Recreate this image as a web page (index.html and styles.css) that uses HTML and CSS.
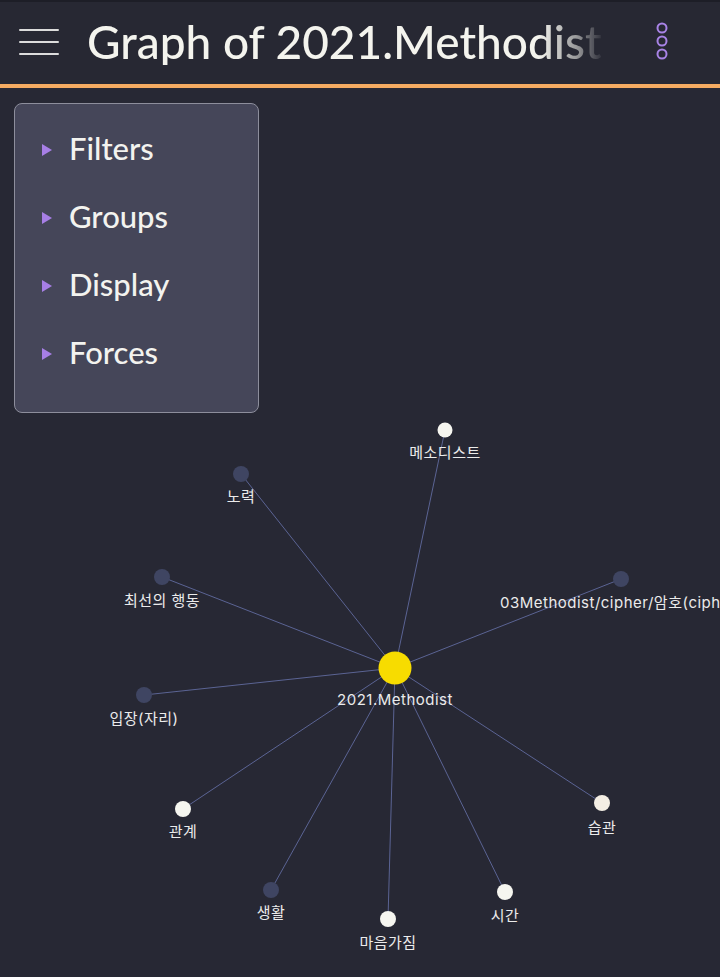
FILE: index.html
```html
<!DOCTYPE html>
<html>
<head>
<meta charset="utf-8">
<link rel="stylesheet" href="styles.css">
</head>
<body>
<div class="app">
  <header class="topbar">
    <div class="menu-btn">
      <svg width="40" height="30" viewBox="0 0 40 30"><g stroke="#dcdcdc" stroke-width="2" stroke-linecap="round"><line x1="1" y1="3" x2="39" y2="3"/><line x1="1" y1="15" x2="39" y2="15"/><line x1="1" y1="27" x2="39" y2="27"/></g></svg>
    </div>
    <div class="title-wrap"><h1 class="title">Graph of 2021.Methodist</h1></div>
    <div class="kebab">
      <svg width="14" height="40" viewBox="0 0 14 40"><g fill="none" stroke="#a883e6" stroke-width="2"><circle cx="7" cy="7" r="4.5"/><circle cx="7" cy="20" r="4.5"/><circle cx="7" cy="33" r="4.5"/></g></svg>
    </div>
  </header>
  <div class="accent"></div>
  <main class="canvas">
    <svg class="graph" width="720" height="890" viewBox="0 87 720 890">
      <g stroke="#5b6494" stroke-width="1">
        <line x1="395" y1="667" x2="445" y2="429"/>
        <line x1="395" y1="667" x2="241" y2="473"/>
        <line x1="395" y1="667" x2="162" y2="576"/>
        <line x1="395" y1="667" x2="621" y2="578"/>
        <line x1="395" y1="667" x2="144" y2="694"/>
        <line x1="395" y1="667" x2="183" y2="808"/>
        <line x1="395" y1="667" x2="271" y2="889"/>
        <line x1="395" y1="667" x2="388" y2="918"/>
        <line x1="395" y1="667" x2="505" y2="891"/>
        <line x1="395" y1="667" x2="602" y2="802"/>
      </g>
      <g>
        <circle cx="445" cy="429" r="7.5" fill="#f6f6f0"/>
        <circle cx="241" cy="473" r="8" fill="#3f4562"/>
        <circle cx="162" cy="576" r="8" fill="#3f4562"/>
        <circle cx="621" cy="578" r="8" fill="#3f4562"/>
        <circle cx="144" cy="694" r="8" fill="#3f4562"/>
        <circle cx="183" cy="808" r="8" fill="#f6f6f0"/>
        <circle cx="271" cy="889" r="8" fill="#3f4562"/>
        <circle cx="388" cy="918" r="8" fill="#f6f6f0"/>
        <circle cx="505" cy="891" r="8" fill="#f6f6f0"/>
        <circle cx="602" cy="802" r="8" fill="#f4eee4"/>
        <circle cx="395" cy="667" r="16.5" fill="#f7dc00"/>
      </g>
      <g class="labels" text-anchor="middle">
        <text x="445" y="457">메소디스트</text>
        <text x="241" y="501">노력</text>
        <text x="162" y="605">최선의 행동</text>
        <text x="621" y="607">03Methodist/cipher/암호(cipher)</text>
        <text x="144" y="723">입장(자리)</text>
        <text x="183" y="836">관계</text>
        <text x="271" y="917">생활</text>
        <text x="388" y="947">마음가짐</text>
        <text x="505" y="920">시간</text>
        <text x="602" y="832">습관</text>
        <text x="395" y="704">2021.Methodist</text>
      </g>
    </svg>
    <nav class="panel">
      <div class="item"><span class="tri"></span><span class="label">Filters</span></div>
      <div class="item"><span class="tri"></span><span class="label">Groups</span></div>
      <div class="item"><span class="tri"></span><span class="label">Display</span></div>
      <div class="item"><span class="tri"></span><span class="label">Forces</span></div>
    </nav>
  </main>
</div>
</body>
</html>
```
FILE: styles.css
```css
* { box-sizing: border-box; }
html, body {
  margin: 0;
  padding: 0;
  background: #272834;
  width: 720px;
  height: 977px;
  overflow: hidden;
}
.app {
  width: 720px;
  height: 977px;
  display: flex;
  flex-direction: column;
  font-family: Lato, "Noto Sans", sans-serif;
}
.topbar {
  height: 84px;
  display: flex;
  align-items: center;
  background: #272833;
  border-top: 2px solid #1d1e27;
}
.menu-btn {
  width: 40px;
  margin-left: 19px;
  display: flex;
  margin-top: -2px;
  flex: none;
}
.title-wrap {
  width: 520px;
  flex: none;
  margin-left: 28px;
  overflow: hidden;
  -webkit-mask-image: linear-gradient(to right, #000 0, #000 452px, rgba(0,0,0,0.55) 490px, rgba(0,0,0,0.1) 512px, rgba(0,0,0,0) 520px);
  mask-image: linear-gradient(to right, #000 0, #000 452px, rgba(0,0,0,0.55) 490px, rgba(0,0,0,0.1) 512px, rgba(0,0,0,0) 520px);
}
.title {
  margin: 0;
  font-size: 46px;
  font-weight: 500;
  color: #f4f4ee;
  white-space: nowrap;
  line-height: 1;
  margin-top: -2px;
}
.kebab {
  margin-left: 48px;
  display: flex;
  margin-top: -4px;
  flex: none;
}
.accent {
  height: 4px;
  background: #f5ab62;
  flex: none;
}
.canvas {
  position: relative;
  flex: 1;
}
.graph {
  position: absolute;
  left: 0;
  top: 0;
}
.labels text {
  font-family: Inter, "Noto Sans CJK KR", sans-serif;
  font-size: 15px;
  letter-spacing: 0.5px;
  fill: #ebebeb;
}
.panel {
  position: absolute;
  left: 14px;
  top: 15px;
  width: 245px;
  height: 310px;
  background: #454659;
  border: 1px solid #8d8e9c;
  border-radius: 8px;
  padding-top: 10px;
  display: flex;
  flex-direction: column;
}
.item {
  height: 68px;
  display: flex;
  align-items: center;
  padding-left: 27px;
}
.tri {
  width: 0;
  height: 0;
  border-left: 10px solid #a77fe6;
  border-top: 6px solid transparent;
  border-bottom: 6px solid transparent;
  margin-right: 17px;
  margin-top: 3px;
}
.label {
  font-size: 31px;
  font-weight: 500;
  color: #f3f3ef;
  line-height: 1;
}
```
